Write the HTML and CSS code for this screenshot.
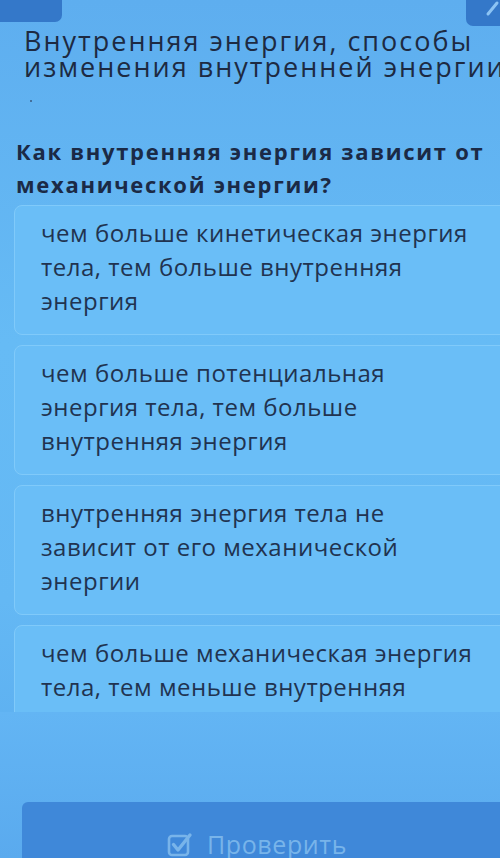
FILE: index.html
```html
<!DOCTYPE html>
<html lang="ru">
<head>
<meta charset="utf-8">
<title>Внутренняя энергия</title>
<link rel="stylesheet" href="styles.css">
</head>
<body>
<div class="page">
  <header class="topbar">
    <div class="tb-btn tb-left"></div>
    <div class="tb-btn tb-right">
      <svg viewBox="0 0 34 26" width="34" height="26"><path d="M22 14 L31 3" stroke="#8cc4f4" stroke-width="3" stroke-linecap="round" fill="none"/></svg>
    </div>
  </header>
  <h1 class="title">Внутренняя энергия, способы<br>изменения внутренней энергии</h1>
  <div class="dot"></div>
  <h2 class="question">Как внутренняя энергия зависит от механической энергии?</h2>
  <div class="options">
    <div class="option">чем больше кинетическая энергия тела, тем больше внутренняя энергия</div>
    <div class="option">чем больше потенциальная энергия тела, тем больше внутренняя энергия</div>
    <div class="option">внутренняя энергия тела не зависит от его механической энергии</div>
    <div class="option">чем больше механическая энергия тела, тем меньше внутренняя энергия</div>
  </div>
</div>
<footer class="footer">
  <button class="check-btn">
    <svg class="check-ico" viewBox="0 0 26 26" width="26" height="26">
      <rect x="2" y="5" width="19" height="19" rx="3" fill="none" stroke="#78b4ea" stroke-width="2.6"/>
      <path d="M6.5 13.5 L11 19 L23 4" fill="none" stroke="#78b4ea" stroke-width="3.4" stroke-linecap="round" stroke-linejoin="round"/>
    </svg>
    <span>Проверить</span>
  </button>
</footer>
</body>
</html>
```
FILE: styles.css
```css
html, body {
  margin: 0;
  padding: 0;
  width: 500px;
  height: 858px;
  overflow: hidden;
}
body {
  background: linear-gradient(180deg, #5eaeef 0%, #66bbf5 40%, #64b8f4 70%, #58aaee 100%);
  font-family: "Open Sans", "DejaVu Sans", sans-serif;
  color: #1b2c48;
  position: relative;
}
.page {
  width: 540px;
  padding: 0 0 0 14px;
  box-sizing: border-box;
}
.topbar {
  display: flex;
  justify-content: space-between;
  height: 28px;
  margin-left: -14px;
  width: 500px;
}
.tb-btn {
  background: #3478c9;
}
.tb-left {
  width: 62px;
  height: 22px;
  border-radius: 0 0 7px 0;
}
.tb-right {
  width: 34px;
  height: 26px;
  border-radius: 0 0 0 7px;
}
.tb-right svg { display: block; }
.title {
  margin: 0 0 0 10px;
  font-size: 27px;
  font-weight: 400;
  line-height: 26px;
  white-space: nowrap;
  color: #1d2a42;
  letter-spacing: 2px;
}
.dot {
  width: 2px;
  height: 2px;
  background: #3a5a80;
  border-radius: 50%;
  margin: 20px 0 0 16px;
}
.question {
  margin: 33px 0 0 2px;
  font-size: 22px;
  font-weight: 700;
  line-height: 33px;
  letter-spacing: 1.7px;
  width: 490px;
  color: #1b2a46;
}
.options {
  display: flex;
  flex-direction: column;
  gap: 10px;
  margin-top: 4px;
}
.option {
  background: #6abef7;
  border: 1px solid #80cafa;
  border-radius: 8px;
  padding: 10px 61px 16px 26px;
  font-size: 24px;
  line-height: 34px;
  letter-spacing: 0.5px;
  color: #213350;
  min-height: 102px;
}
.footer {
  position: absolute;
  left: 0;
  top: 712px;
  width: 500px;
  height: 146px;
  background: linear-gradient(180deg, #63b5f4 0%, #5aaaee 100%);
  padding: 90px 0 0 22px;
  box-sizing: border-box;
  overflow: hidden;
}
.check-btn {
  display: flex;
  align-items: flex-start;
  justify-content: center;
  gap: 14px;
  width: 520px;
  height: 80px;
  border: none;
  border-radius: 6px 0 0 0;
  background: #3f88d9;
  padding: 27px 50px 0 0;
  box-sizing: border-box;
  font-family: "Open Sans", "DejaVu Sans", sans-serif;
  font-size: 25px;
  line-height: 30px;
  letter-spacing: 0.6px;
  color: #78b4ea;
}
.check-ico { margin-top: 2px; }
```
